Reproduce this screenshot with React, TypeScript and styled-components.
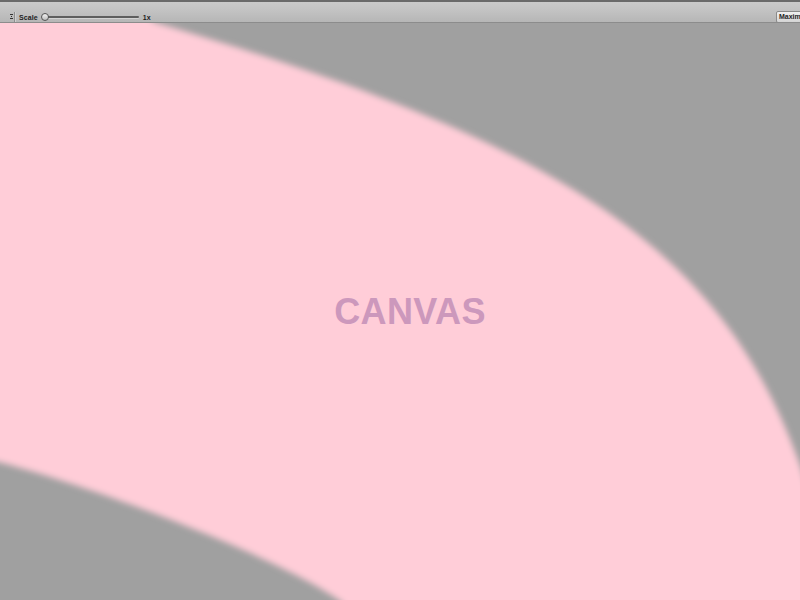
import { createGlobalStyle, styled } from 'styled-components';

const GlobalStyle = createGlobalStyle`
  html, body {
    margin: 0;
    padding: 0;
    width: 800px;
    height: 600px;
    overflow: hidden;
    background: #a0a0a0;
  }
`;

// outer and inner edges of the pink band, in page coordinates
const BAND_PATH = [
  'M -20 0 L 130 0 L 154 23',
  'C 562 143, 723 250, 800 465',
  'L 830 560 L 830 620 L 345 620 L 343 603',
  'C 285 560, 95 486, -10 460',
  'L -20 460 Z',
].join(' ');

export default function App(): JSX.Element {
  return (
    <>
      <GlobalStyle />
      <StyledWindow>
        <StyledTopStrip />
        <StyledToolbar>
          <StyledGrip>
            <svg width="3" height="6" viewBox="0 0 3 6">
              <rect x="0" y="0" width="3" height="1" fill="#333" />
              <rect x="1" y="2" width="1" height="1" fill="#333" />
              <rect x="0" y="4" width="3" height="1" fill="#333" />
            </svg>
          </StyledGrip>
          <StyledDivider />
          <StyledLabel>Scale</StyledLabel>
          <StyledSlider>
            <StyledTrack />
            <StyledThumb />
          </StyledSlider>
          <StyledValue>1x</StyledValue>
          <StyledSpacer />
          <StyledButtonClip>
            <StyledButton type="button">Maximize on Play</StyledButton>
          </StyledButtonClip>
        </StyledToolbar>
        <StyledCanvas>
          <StyledDrawing viewBox="0 24 800 576" preserveAspectRatio="none">
            <defs>
              <filter id="soft" x="-10%" y="-10%" width="120%" height="120%">
                <feGaussianBlur stdDeviation="3.2" />
              </filter>
            </defs>
            <path d={BAND_PATH} fill="#ffcdd8" filter="url(#soft)" />
          </StyledDrawing>
          <StyledCanvasLabel>CANVAS</StyledCanvasLabel>
        </StyledCanvas>
      </StyledWindow>
    </>
  );
}

const StyledWindow = styled.div`
  width: 800px;
  height: 600px;
  display: flex;
  flex-direction: column;
  font-family: 'Liberation Sans', Arial, sans-serif;
`;
const StyledTopStrip = styled.div`
  height: 9px;
  flex: 0 0 9px;
  border-top: 2px solid #6a6a6a;
  background: linear-gradient(#cacaca, #c2c2c2);
`;
const StyledToolbar = styled.div`
  flex: 0 0 12px;
  height: 12px;
  box-sizing: border-box;
  padding-top: 1px;
  display: flex;
  align-items: center;
  overflow: hidden;
  background: linear-gradient(#c2c2c2, #b6b6b6);
  border-bottom: 1px solid #8c8c8c;
  color: #1e1e1e;
`;
const StyledGrip = styled.div`
  width: 6px;
  margin-left: 8px;
  display: flex;
  align-items: center;
  justify-content: center;
`;
const StyledDivider = styled.div`
  width: 1px;
  height: 11px;
  background: #8e8e8e;
  box-shadow: 1px 0 0 #d0d0d0;
`;
const StyledLabel = styled.span`
  margin-left: 4px;
  font-size: 7px;
  font-weight: bold;
  letter-spacing: 0.1px;
`;
const StyledSlider = styled.div`
  position: relative;
  width: 98px;
  height: 10px;
  margin-left: 3px;
  display: flex;
  align-items: center;
`;
const StyledTrack = styled.div`
  flex: 1;
  height: 2px;
  margin-left: 4px;
  background: #5e5e5e;
  box-shadow: 0 1px 0 #d2d2d2;
  border-radius: 1px;
`;
const StyledThumb = styled.div`
  position: absolute;
  left: 0;
  top: 1px;
  width: 6px;
  height: 6px;
  border-radius: 50%;
  border: 1px solid #555;
  background: linear-gradient(#f2f2f2, #bdbdbd);
`;
const StyledValue = styled.span`
  margin-left: 4px;
  font-size: 7px;
  font-weight: bold;
`;
const StyledSpacer = styled.div`
  flex: 1;
`;
const StyledButtonClip = styled.div`
  flex: 0 0 24px;
  width: 24px;
  height: 12px;
  overflow: hidden;
  display: flex;
  align-items: flex-end;
`;
const StyledButton = styled.button`
  flex: 0 0 auto;
  height: 12px;
  padding: 0 2px;
  margin: 0;
  border: 1px solid #8a8a8a;
  border-radius: 2px;
  background: linear-gradient(#f0f0f0, #d4d4d4);
  font-family: 'Liberation Sans', Arial, sans-serif;
  font-size: 7px;
  font-weight: bold;
  color: #1e1e1e;
  white-space: nowrap;
  line-height: 10px;
`;
const StyledCanvas = styled.div`
  position: relative;
  flex: 1;
  background: #a0a0a0;
  display: flex;
  align-items: center;
  justify-content: center;
  padding-left: 20px;
  overflow: hidden;
`;
const StyledDrawing = styled.svg`
  position: absolute;
  inset: 0;
  width: 100%;
  height: 100%;
`;
const StyledCanvasLabel = styled.div`
  position: relative;
  font-size: 36px;
  font-weight: bold;
  color: #cc98bc;
  letter-spacing: 0.4px;
`;
